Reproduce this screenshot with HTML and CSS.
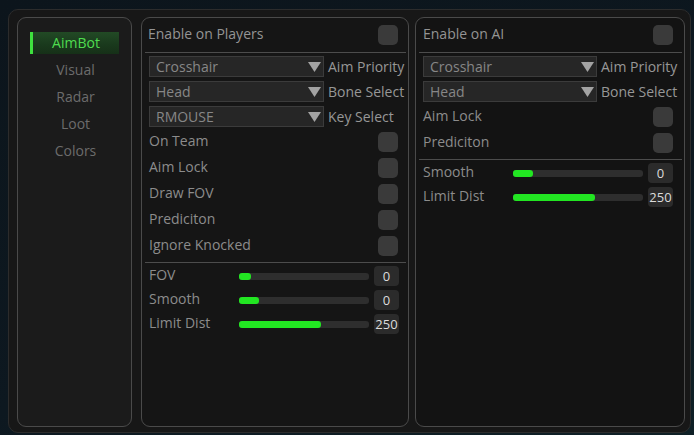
FILE: index.html
```html
<!DOCTYPE html>
<html>
<head>
<meta charset="utf-8">
<link rel="stylesheet" href="styles.css">
</head>
<body>
<div class="window">
  <div class="sidebar">
    <div class="tab active">AimBot</div>
    <div class="tab">Visual</div>
    <div class="tab">Radar</div>
    <div class="tab">Loot</div>
    <div class="tab">Colors</div>
  </div>

  <div class="panel mid">
    <div class="header"><span>Enable on Players</span><span class="check"></span></div>
    <div class="sep"></div>
    <div class="combos">
      <div class="combo-row"><div class="combo"><span>Crosshair</span><svg class="arrow" viewBox="0 0 13 10"><path d="M0 0H13L6.5 10Z"/></svg></div><span class="clabel">Aim Priority</span></div>
      <div class="combo-row"><div class="combo"><span>Head</span><svg class="arrow" viewBox="0 0 13 10"><path d="M0 0H13L6.5 10Z"/></svg></div><span class="clabel">Bone Select</span></div>
      <div class="combo-row"><div class="combo"><span>RMOUSE</span><svg class="arrow" viewBox="0 0 13 10"><path d="M0 0H13L6.5 10Z"/></svg></div><span class="clabel">Key Select</span></div>
    </div>
    <div class="checks">
      <div class="crow"><span>On Team</span><span class="check"></span></div>
      <div class="crow"><span>Aim Lock</span><span class="check"></span></div>
      <div class="crow"><span>Draw FOV</span><span class="check"></span></div>
      <div class="crow"><span>Prediciton</span><span class="check"></span></div>
      <div class="crow"><span>Ignore Knocked</span><span class="check"></span></div>
    </div>
    <div class="sep sep2"></div>
    <div class="sliders">
      <div class="srow"><span class="slabel">FOV</span><div class="track"><div class="fill" style="width:12px"></div></div><span class="val">0</span></div>
      <div class="srow"><span class="slabel">Smooth</span><div class="track"><div class="fill" style="width:20px"></div></div><span class="val">0</span></div>
      <div class="srow"><span class="slabel">Limit Dist</span><div class="track"><div class="fill" style="width:82px"></div></div><span class="val">250</span></div>
    </div>
  </div>

  <div class="panel right">
    <div class="header"><span>Enable on AI</span><span class="check"></span></div>
    <div class="sep"></div>
    <div class="combos">
      <div class="combo-row"><div class="combo"><span>Crosshair</span><svg class="arrow" viewBox="0 0 13 10"><path d="M0 0H13L6.5 10Z"/></svg></div><span class="clabel">Aim Priority</span></div>
      <div class="combo-row"><div class="combo"><span>Head</span><svg class="arrow" viewBox="0 0 13 10"><path d="M0 0H13L6.5 10Z"/></svg></div><span class="clabel">Bone Select</span></div>
    </div>
    <div class="checks">
      <div class="crow"><span>Aim Lock</span><span class="check"></span></div>
      <div class="crow"><span>Prediciton</span><span class="check"></span></div>
    </div>
    <div class="sep sep2"></div>
    <div class="sliders">
      <div class="srow"><span class="slabel">Smooth</span><div class="track"><div class="fill" style="width:20px"></div></div><span class="val">0</span></div>
      <div class="srow"><span class="slabel">Limit Dist</span><div class="track"><div class="fill" style="width:82px"></div></div><span class="val">250</span></div>
    </div>
  </div>
</div>
</body>
</html>
```
FILE: styles.css
```css
* { box-sizing: border-box; }
html, body { margin: 0; padding: 0; }
body {
  width: 694px;
  height: 435px;
  overflow: hidden;
  background: linear-gradient(160deg, #0c151c 0%, #0d1820 60%, #0f2026 100%);
  font-family: "Open Sans", "DejaVu Sans", sans-serif;
  font-size: 14px;
  color: #8c8c8c;
}
.window {
  margin: 9px 0 0 8px;
  width: 683px;
  height: 424px;
  background: #171717;
  border: 1px solid #2c2c2c;
  border-radius: 10px;
  padding: 7px 5px 0 8px;
  display: flex;
  align-items: flex-start;
}
.sidebar {
  width: 115px;
  height: 410px;
  background: #1b1b1b;
  border: 1px solid #4a4a4a;
  border-radius: 9px;
  padding: 14px 0 0 12px;
  margin-right: 9px;
}
.tab {
  width: 89px;
  height: 22px;
  margin-bottom: 5px;
  line-height: 22px;
  text-align: center;
  color: #6c6c6c;
  padding-left: 2px;
}
.tab.active {
  color: #4fdc4f;
  background: linear-gradient(180deg, #224a25 0%, #1a3a1d 55%, #163018 100%);
  border-left: 3px solid #3ee23e;
  padding-left: 0;
}
.panel {
  height: 410px;
  border: 1px solid #4a4a4a;
  border-radius: 9px;
  padding: 0 0 0 1px;
}
.mid { width: 268px; background: #151515; margin-right: 6px; }
.right { width: 270px; background: #131313; }
.header {
  height: 24px;
  margin-top: 5px;
  display: flex;
  align-items: center;
  justify-content: space-between;
  padding-left: 5px;
  padding-right: 10px;
  color: #949494;
}
.header span:first-child { position: relative; top: -2px; }
.right .header { padding-left: 6px; padding-right: 11px; }
.check {
  width: 20px;
  height: 20px;
  border-radius: 5px;
  background: #3a3a3a;
  flex: none;
}
.sep {
  height: 1px;
  background: #4c4c4c;
  margin: 5px 2px 3px 2px;
}
.combos { display: flex; flex-direction: column; gap: 4px; padding-left: 6px; }
.right .combos { padding-left: 6px; }
.combo-row { display: flex; align-items: center; height: 21px; }
.combo {
  width: 175px;
  height: 21px;
  background: #262626;
  border: 1px solid #3b3b3b;
  display: flex;
  align-items: center;
  justify-content: space-between;
  padding: 0 2px 0 6px;
  color: #878787;
  flex: none;
}
.right .combo { width: 174px; }
.arrow { width: 13px; height: 10px; fill: #a3a3a3; }
.clabel { margin-left: 4px; color: #979797; white-space: nowrap; }
.checks { margin-top: 2px; }
.crow {
  height: 26px;
  display: flex;
  align-items: center;
  justify-content: space-between;
  padding-left: 6px;
  padding-right: 10px;
}
.right .crow { padding-left: 6px; padding-right: 11px; }
.crow span:first-child { position: relative; top: -2px; }
.sep2 { margin: 3px 2px 1px 2px; }
.srow {
  height: 24px;
  display: flex;
  align-items: center;
  padding-left: 6px;
}
.slabel { width: 90px; flex: none; position: relative; top: -2px; }
.track {
  width: 130px;
  height: 7px;
  background: #2e2e2e;
  border-radius: 3px;
  flex: none;
}
.fill { height: 7px; background: #22e622; border-radius: 3px; }
.val {
  width: 25px;
  height: 20px;
  margin-left: 5px;
  background: #2b2b2b;
  border-radius: 4px;
  color: #dcdcdc;
  font-size: 13px;
  display: flex;
  align-items: center;
  justify-content: center;
  flex: none;
}
```
